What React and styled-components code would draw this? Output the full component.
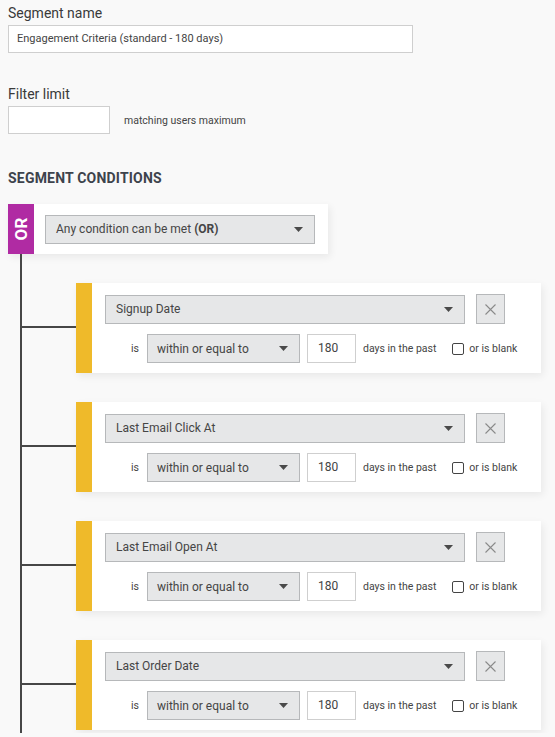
import React from 'react';
import styled, { createGlobalStyle } from 'styled-components';

const GlobalStyle = createGlobalStyle`
  html, body {
    margin: 0;
    padding: 0;
    background: #f9f9f9;
  }
  body {
    font-family: Roboto, "Liberation Sans", Arial, sans-serif;
    color: #404040;
    overflow: hidden;
  }
`

const conditions = [
  'Signup Date',
  'Last Email Click At',
  'Last Email Open At',
  'Last Order Date',
];

const Caret = () => (
  <svg width="9" height="5" viewBox="0 0 9 5">
    <path d="M0 0 L9 0 L4.5 5 Z" fill="#4a4a4a" />
  </svg>
);

const CloseIcon = () => (
  <svg width="11" height="11" viewBox="0 0 11 11">
    <path d="M0.5 0.5 L10.5 10.5 M10.5 0.5 L0.5 10.5" stroke="#8a8a8a" strokeWidth="1.1" fill="none" />
  </svg>
);

const App = () => {
  return (
    <Page>
      <GlobalStyle />
      <Field>
        <Label>Segment name</Label>
        <TextInput $width={405}>Engagement Criteria (standard - 180 days)</TextInput>
      </Field>
      <Field $gap={32}>
        <Label>Filter limit</Label>
        <LimitRow>
          <TextInput $width={102}></TextInput>
          <Hint>matching users maximum</Hint>
        </LimitRow>
      </Field>
      <Heading>Segment conditions</Heading>
      <GroupPanel>
        <GroupTag><span>OR</span></GroupTag>
        <Select $width={270} $height={29} $pad={10}>
          <span>Any condition can be met <b>(OR)</b></span>
          <Caret />
        </Select>
      </GroupPanel>
      <Tree>
        {conditions.map((name) => (
          <Card key={name}>
            <Strip />
            <CardBody>
              <CardRow>
                <Select $width={360} $height={29} $pad={10}>
                  <span>{name}</span>
                  <Caret />
                </Select>
                <RemoveButton><CloseIcon /></RemoveButton>
              </CardRow>
              <CardRow $indent={26}>
                <Small>is</Small>
                <Select $width={153} $height={29} $pad={9} $ml={8}>
                  <span>within or equal to</span>
                  <Caret />
                </Select>
                <NumberInput>180</NumberInput>
                <Small $ml={7}>days in the past</Small>
                <Check />
                <Small $ml={5}>or is blank</Small>
              </CardRow>
            </CardBody>
          </Card>
        ))}
      </Tree>
    </Page>
  );
}

export default App;

const Page = styled.div`
  padding: 4px 8px 0 8px;
  height: 733px;
  box-sizing: border-box;
`
const Field = styled.div`
  display: flex;
  flex-direction: column;
  margin-top: ${p => p.$gap || 0}px;
`
const Label = styled.div`
  font-size: 14px;
  line-height: 18px;
  color: #3a3a3a;
  margin-bottom: 3px;
`
const TextInput = styled.div`
  width: ${p => p.$width}px;
  height: 28px;
  box-sizing: border-box;
  border: 1px solid #cfcfcf;
  background: #fff;
  font-size: 11px;
  line-height: 26px;
  padding-left: 8px;
  color: #444;
`
const LimitRow = styled.div`
  display: flex;
  align-items: center;
`
const Hint = styled.span`
  font-size: 10.5px;
  color: #444;
  margin-left: 14px;
`
const Heading = styled.h2`
  margin: 35px 0 0 0;
  font-size: 14px;
  line-height: 18px;
  font-weight: 700;
  text-transform: uppercase;
  letter-spacing: 0.2px;
  color: #3d434c;
`
const GroupPanel = styled.div`
  margin-top: 17px;
  width: 320px;
  height: 50px;
  display: flex;
  align-items: center;
  background: #fff;
  box-shadow: 2px 3px 8px rgba(0, 0, 0, 0.07);
`
const GroupTag = styled.div`
  width: 26px;
  align-self: stretch;
  background: #b02ba3;
  display: flex;
  align-items: center;
  justify-content: center;
  margin-right: 11px;
  span {
    transform: rotate(-90deg);
    color: #fff;
    font-weight: 700;
    font-size: 17px;
    letter-spacing: 0.3px;
  }
`
const Select = styled.div`
  width: ${p => p.$width}px;
  height: ${p => p.$height}px;
  margin-left: ${p => p.$ml || 0}px;
  box-sizing: border-box;
  border: 1px solid #b6b8ba;
  background: #e6e7e8;
  display: flex;
  align-items: center;
  justify-content: space-between;
  padding: 0 11px 0 ${p => p.$pad}px;
  font-size: 12px;
  color: #454545;
  flex-shrink: 0;
  b {
    font-weight: 700;
  }
`
const Tree = styled.div`
  position: relative;
  padding: 29px 0 40px 68px;
  display: flex;
  flex-direction: column;
  gap: 29px;
  &::before {
    content: '';
    position: absolute;
    left: 12px;
    top: 0;
    bottom: 0;
    width: 2px;
    background: #474747;
  }
`
const Card = styled.div`
  position: relative;
  width: 465px;
  height: 90px;
  display: flex;
  background: #fff;
  box-shadow: 2px 3px 8px rgba(0, 0, 0, 0.07);
  &::before {
    content: '';
    position: absolute;
    left: -54px;
    top: 43px;
    width: 54px;
    height: 2px;
    background: #474747;
  }
`
const Strip = styled.div`
  width: 16px;
  background: #efba2a;
`
const CardBody = styled.div`
  display: flex;
  flex-direction: column;
  gap: 10px;
  padding: 11px 0 0 13px;
`
const CardRow = styled.div`
  display: flex;
  align-items: center;
  padding-left: ${p => p.$indent || 0}px;
`
const RemoveButton = styled.div`
  width: 29px;
  height: 30px;
  margin-left: 11px;
  box-sizing: border-box;
  border: 1px solid #b6b8ba;
  background: #e6e7e8;
  display: flex;
  align-items: center;
  justify-content: center;
`
const Small = styled.span`
  font-size: 10.5px;
  color: #444;
  margin-left: ${p => p.$ml || 0}px;
  white-space: nowrap;
`
const NumberInput = styled.div`
  width: 49px;
  height: 29px;
  margin-left: 7px;
  box-sizing: border-box;
  border: 1px solid #cfcfcf;
  background: #fff;
  font-size: 12px;
  line-height: 27px;
  padding-left: 10px;
  color: #444;
`
const Check = styled.span`
  width: 10px;
  height: 10px;
  margin-left: 16px;
  border: 1px solid #444;
  border-radius: 2px;
  flex-shrink: 0;
`
